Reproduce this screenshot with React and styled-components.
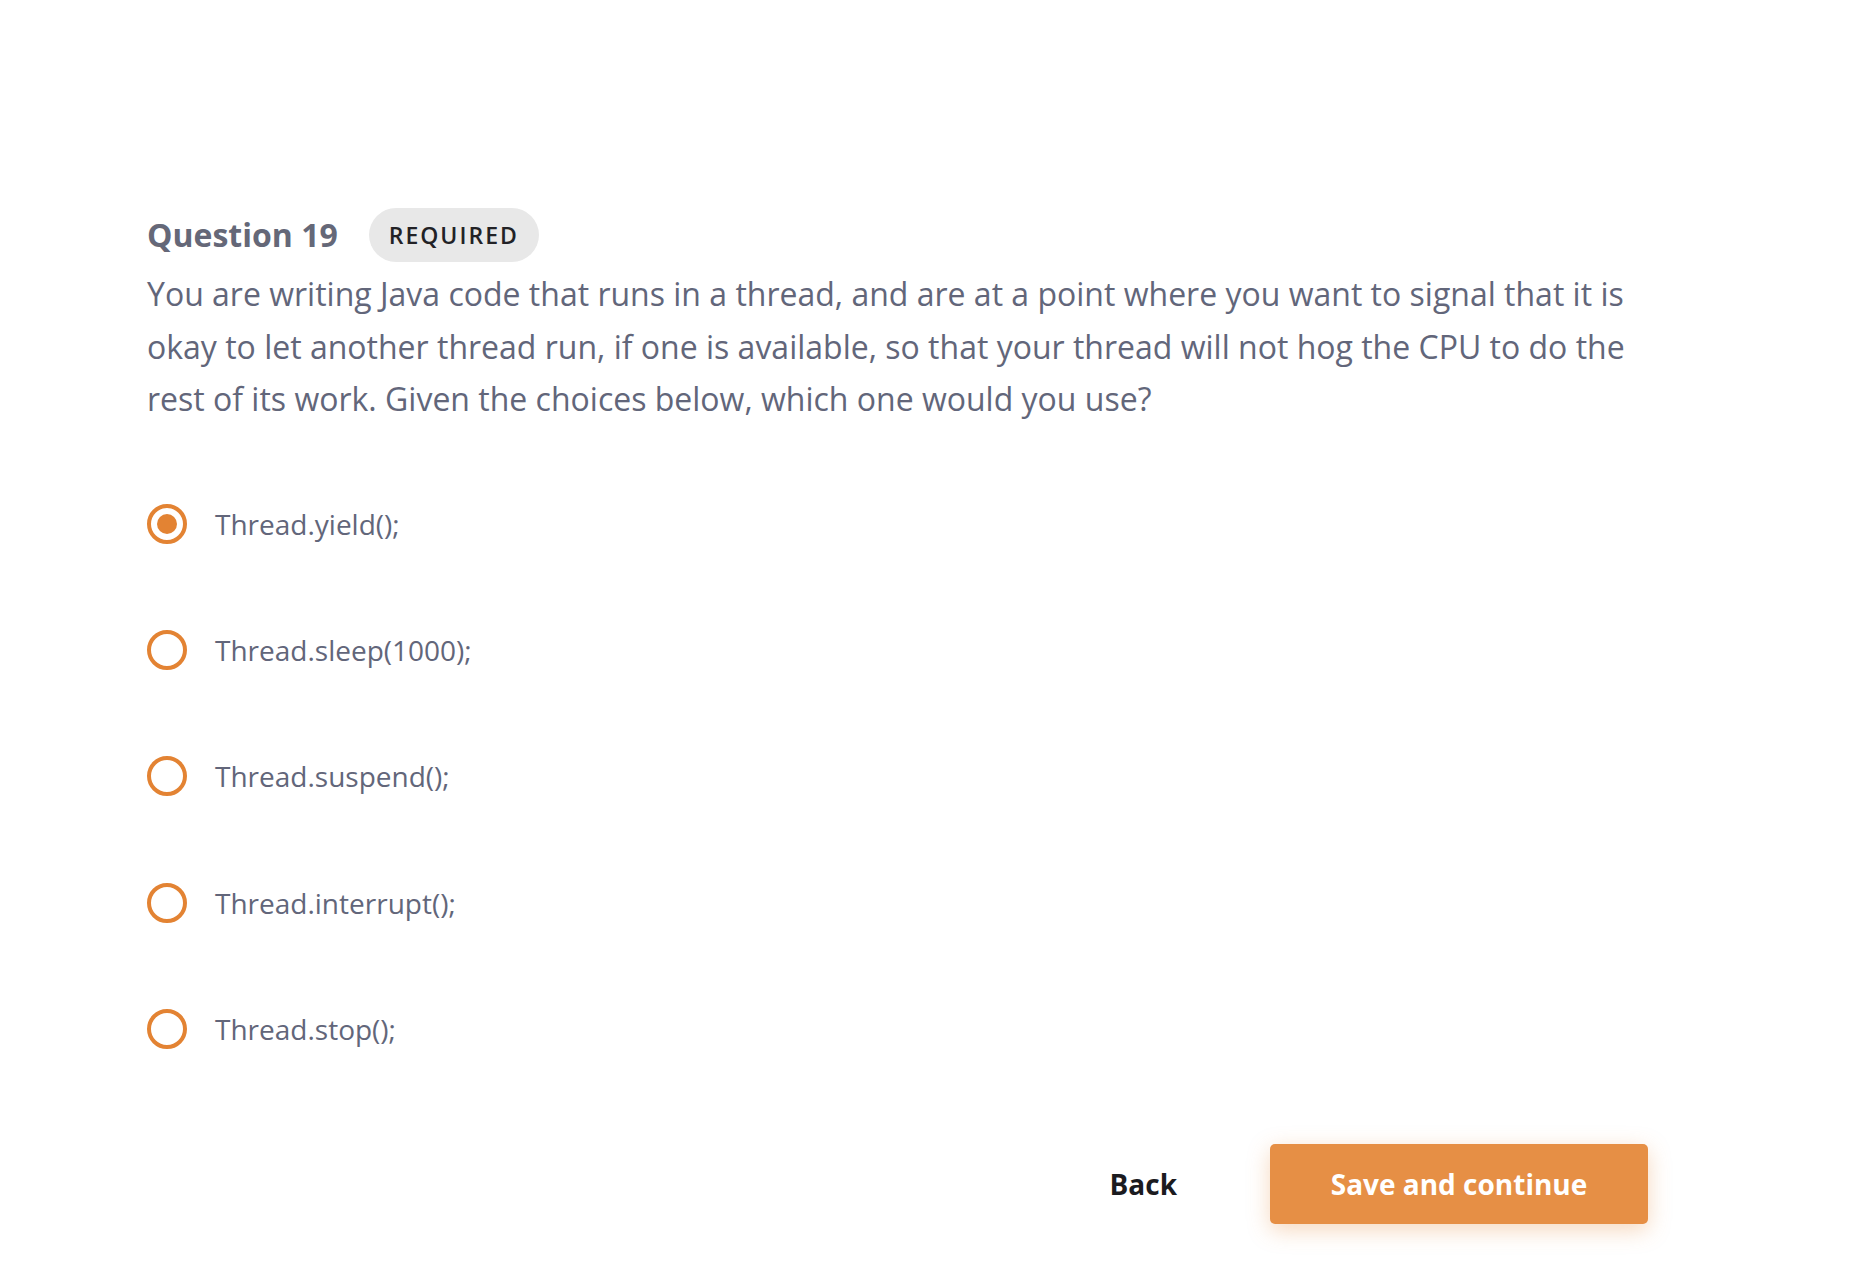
import React, { useState } from "react";
import styled, { createGlobalStyle } from "styled-components";

const Global = createGlobalStyle`
  html, body { margin: 0; padding: 0; background: #ffffff; }
  body { font-family: "Open Sans", "Noto Sans", sans-serif; }
  * { box-sizing: border-box; }
`;

const Page = styled.main`
  width: 1852px;
  min-height: 1268px;
  padding: 206px 0 0 147px;
  display: flex;
  flex-direction: column;
`;

const Content = styled.div`
  width: 1501px;
  display: flex;
  flex-direction: column;
`;

const HeaderRow = styled.div`
  display: flex;
  align-items: center;
  gap: 31px;
`;

const Title = styled.h2`
  margin: 0;
  font-size: 32px;
  font-weight: 700;
  color: #656878;
  line-height: 58px;
`;

const Badge = styled.span`
  display: inline-flex;
  align-items: center;
  justify-content: center;
  height: 54px;
  padding: 0 20px;
  border-radius: 27px;
  background: #e8e8e8;
  color: #222226;
  font-size: 23px;
  font-weight: 600;
  letter-spacing: 2px;
`;

const Prompt = styled.p`
  margin: 4px 0 0;
  font-size: 32px;
  line-height: 52.5px;
  color: #62667a;
`;

const Options = styled.div`
  display: flex;
  flex-direction: column;
  margin-top: 35px;
`;

const Option = styled.label`
  display: flex;
  align-items: center;
  gap: 28px;
  height: 126.4px;
  cursor: pointer;
`;

const Radio = styled.span`
  width: 40px;
  height: 40px;
  border-radius: 50%;
  border: 4px solid #e38333;
  display: flex;
  align-items: center;
  justify-content: center;
  flex-shrink: 0;
  &::after {
    content: "";
    width: 20px;
    height: 20px;
    border-radius: 50%;
    background: #e38333;
    display: ${(p) => (p.$checked ? "block" : "none")};
  }
`;

const OptionText = styled.span`
  font-size: 28px;
  color: #62667a;
`;

const Footer = styled.div`
  display: flex;
  justify-content: flex-end;
  align-items: center;
  gap: 93px;
  margin-top: 52px;
`;

const BackButton = styled.button`
  background: none;
  border: none;
  padding: 0;
  font-family: inherit;
  font-size: 28px;
  font-weight: 700;
  color: #1b1b1f;
  cursor: pointer;
`;

const PrimaryButton = styled.button`
  width: 378px;
  height: 80px;
  border: none;
  border-radius: 5px;
  background: #e68f45;
  color: #ffffff;
  font-family: inherit;
  font-size: 28px;
  font-weight: 700;
  box-shadow: 0 6px 22px rgba(230, 143, 69, 0.35);
  cursor: pointer;
`;

const choices = [
  "Thread.yield();",
  "Thread.sleep(1000);",
  "Thread.suspend();",
  "Thread.interrupt();",
  "Thread.stop();",
];

export default function App() {
  const [selected, setSelected] = useState(0);
  return (
    <>
      <Global />
      <Page>
        <Content>
          <HeaderRow>
            <Title>Question 19</Title>
            <Badge>REQUIRED</Badge>
          </HeaderRow>
          <Prompt>
            You are writing Java code that runs in a thread, and are at a point where you want to signal that it is okay to let another thread run, if one is available, so that your thread will not hog the CPU to do the rest of its work. Given the choices below, which one would you use?
          </Prompt>
          <Options>
            {choices.map((c, i) => (
              <Option key={c} onClick={() => setSelected(i)}>
                <Radio $checked={selected === i} />
                <OptionText>{c}</OptionText>
              </Option>
            ))}
          </Options>
          <Footer>
            <BackButton>Back</BackButton>
            <PrimaryButton>Save and continue</PrimaryButton>
          </Footer>
        </Content>
      </Page>
    </>
  );
}
